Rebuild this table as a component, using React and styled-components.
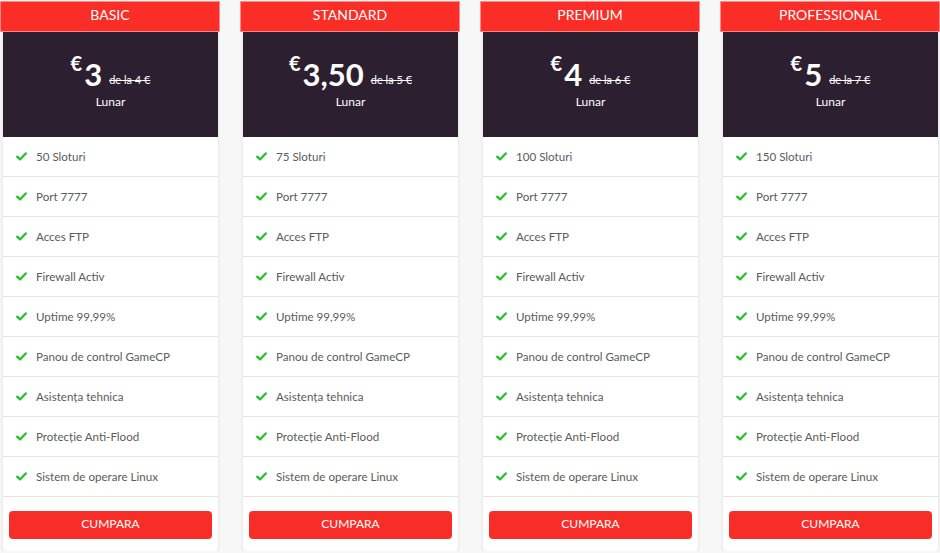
import React from "react";
import styled, { createGlobalStyle } from "styled-components";

const Global = createGlobalStyle`
  html, body { margin: 0; padding: 0; background: #f7f7f7; }
  body { font-family: Lato, "Noto Sans", sans-serif; }
`;

const Row = styled.div`
  display: grid;
  grid-template-columns: repeat(4, 220px);
  column-gap: 20px;
  width: 940px;
  padding-top: 1px;
`;

const Column = styled.div`
  display: flex;
  flex-direction: column;
`;

const Title = styled.div`
  height: 29px;
  box-sizing: content-box;
  background: #fa2d27;
  border: 1px solid #fb8a86;
  color: #fff;
  font-size: 14px;
  display: flex;
  align-items: center;
  justify-content: center;
  padding-bottom: 0;
  line-height: 1;
  & > span { position: relative; top: -2px; }
`;

const Card = styled.div`
  margin: 0 2px 0 3px;
  background: #fff;
  box-shadow: 0 1px 3px rgba(0, 0, 0, 0.12);
  border-radius: 0 0 3px 3px;
  padding-bottom: 12px;
`;

const PriceBox = styled.div`
  height: 105px;
  background: #2c1f2f;
  color: #fff;
  display: flex;
  flex-direction: column;
  align-items: center;
  padding-top: 21px;
  box-sizing: border-box;
`;

const PriceLine = styled.div`
  display: flex;
  align-items: flex-end;
  height: 36px;
`;

const Currency = styled.span`
  font-size: 20px;
  font-weight: 700;
  align-self: flex-start;
  margin-right: 2px;
  line-height: 1;
`;

const Amount = styled.span`
  font-size: 31px;
  font-weight: 700;
  line-height: 30px;
`;

const Old = styled.span`
  font-size: 11px;
  text-decoration: line-through;
  margin-left: 7px;
  margin-bottom: 4px;
  line-height: 1;
`;

const Period = styled.div`
  font-size: 12px;
  margin-top: 5px;
`;

const Features = styled.ul`
  list-style: none;
  margin: 0;
  padding: 0;
`;

const Feature = styled.li`
  height: 39px;
  border-bottom: 1px solid #e4e4e4;
  display: flex;
  align-items: center;
  padding-left: 13px;
  gap: 9px;
  font-size: 11.6px;
  color: #5b5b5b;
`;

const Buy = styled.button`
  display: block;
  margin: 14px 6px 0 6px;
  width: calc(100% - 12px);
  height: 28px;
  border: none;
  border-radius: 4px;
  background: #f92d27;
  color: #fff;
  font-family: inherit;
  font-size: 12px;
  padding: 0 0 3px 0;
  cursor: pointer;
`;

const Check = () => (
  <svg width="11" height="9" viewBox="0 0 11 9">
    <path d="M1.2 4.6 L4 7.4 L9.8 1.4" fill="none" stroke="#22c02a" strokeWidth="2.2" strokeLinecap="round" strokeLinejoin="round" />
  </svg>
);

const features = (slots) => [
  `${slots} Sloturi`,
  "Port 7777",
  "Acces FTP",
  "Firewall Activ",
  "Uptime 99,99%",
  "Panou de control GameCP",
  "Asistența tehnica",
  "Protecție Anti-Flood",
  "Sistem de operare Linux",
];

const plans = [
  { name: "BASIC", price: "3", old: "4", slots: 50 },
  { name: "STANDARD", price: "3,50", old: "5", slots: 75 },
  { name: "PREMIUM", price: "4", old: "6", slots: 100 },
  { name: "PROFESSIONAL", price: "5", old: "7", slots: 150 },
];

export default function App() {
  return (
    <>
      <Global />
      <Row>
        {plans.map((p) => (
          <Column key={p.name}>
            <Title><span>{p.name}</span></Title>
            <Card>
              <PriceBox>
                <PriceLine>
                  <Currency>€</Currency>
                  <Amount>{p.price}</Amount>
                  <Old>de la {p.old} €</Old>
                </PriceLine>
                <Period>Lunar</Period>
              </PriceBox>
              <Features>
                {features(p.slots).map((f) => (
                  <Feature key={f}>
                    <Check />
                    {f}
                  </Feature>
                ))}
              </Features>
              <Buy>CUMPARA</Buy>
            </Card>
          </Column>
        ))}
      </Row>
    </>
  );
}
